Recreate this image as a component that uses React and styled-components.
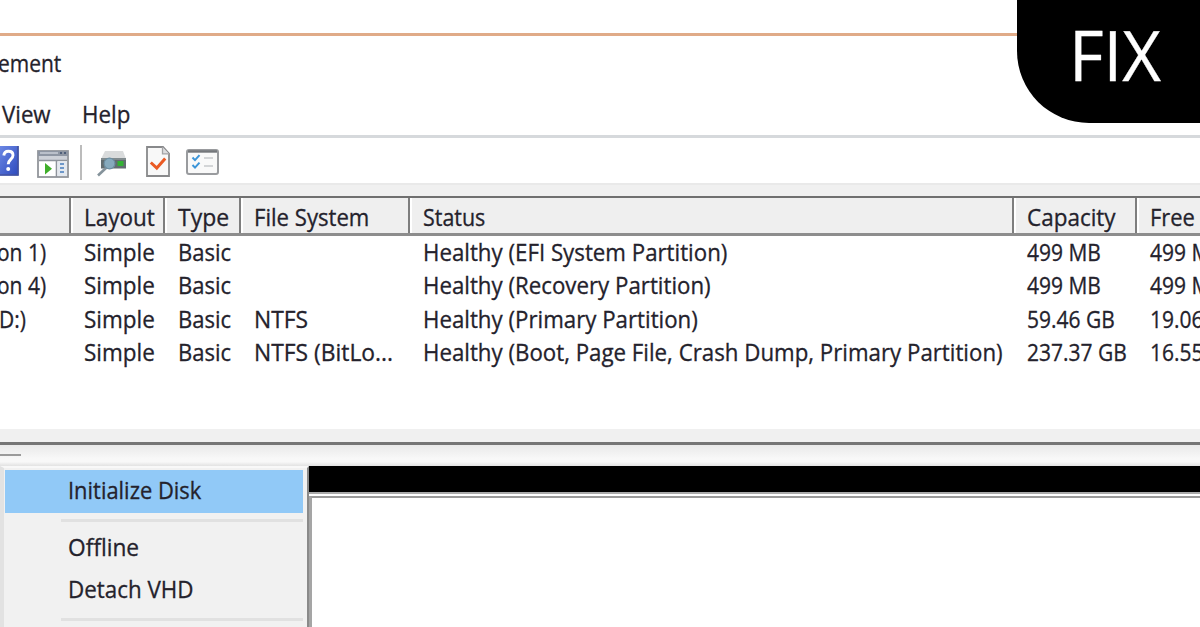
import styled, { createGlobalStyle } from "styled-components";

const columns = "71px 94px 76px 169px 604px 123px 150px";

const headers = [
  ["", 0.9],
  ["Layout", 0.965],
  ["Type", 0.985],
  ["File System", 0.95],
  ["Status", 0.92],
  ["Capacity", 0.965],
  ["Free Space", 0.94],
];

const volumes = [
  ["on 1)", "Simple", "Basic", "", "Healthy (EFI System Partition)", "499 MB", "499 MB"],
  ["on 4)", "Simple", "Basic", "", "Healthy (Recovery Partition)", "499 MB", "499 MB"],
  ["D:)", "Simple", "Basic", "NTFS", "Healthy (Primary Partition)", "59.46 GB", "19.06 GB"],
  [
    "",
    "Simple",
    "Basic",
    "NTFS (BitLo...",
    "Healthy (Boot, Page File, Crash Dump, Primary Partition)",
    "237.37 GB",
    "16.55 GB",
  ],
];

// horizontal stretch of the text in each column
const stretches = [0.9, 0.965, 0.945, 0.98, 0.956, 0.9, 0.9];

const App = () => {
  return (
    <Screen>
      <GlobalStyle />
      <TopMargin />
      <TitleBar>
        <Label $stretch={0.9}>ement</Label>
      </TitleBar>
      <MenuBar>
        <Label $stretch={0.955}>View</Label>
        <Label $stretch={0.96}>Help</Label>
      </MenuBar>
      <Toolbar>
        <HelpIcon />
        <ConsoleIcon />
        <Divider />
        <DriveIcon />
        <CheckIcon />
        <ListIcon />
      </Toolbar>
      <Gutter />
      <HeaderRow>
        {headers.map(([text, stretch], i) => (
          <HeaderCell key={i} $first={i === 0}>
            <Label $stretch={stretch}>{text}</Label>
          </HeaderCell>
        ))}
      </HeaderRow>
      <Volumes>
        {volumes.map((row, i) => (
          <Row key={i}>
            {row.map((text, j) => (
              <Cell key={j} $shift={j > 0 ? 0 : text === "D:)" ? -1 : -3}>
                <Label $stretch={stretches[j]}>{text}</Label>
              </Cell>
            ))}
          </Row>
        ))}
      </Volumes>
      <Splitter />
      <PaneTop>
        <PaneEdge />
      </PaneTop>
      <Lower>
        <ContextMenu>
          <MenuItem $active>
            <Label $stretch={0.94}>Initialize Disk</Label>
          </MenuItem>
          <Separator />
          <MenuItem>
            <Label $stretch={0.975}>Offline</Label>
          </MenuItem>
          <MenuItem>
            <Label $stretch={0.96}>Detach VHD</Label>
          </MenuItem>
          <Separator />
        </ContextMenu>
        <DiskPane>
          <DiskStripe />
          <DiskBody />
        </DiskPane>
      </Lower>
      <Badge>
        <Label $stretch={0.965}>FIX</Label>
      </Badge>
    </Screen>
  );
};

const HelpIcon = () => (
  <Icon width="20" height="32" viewBox="0 0 20 32" $left={0} $top={0}>
    <defs>
      <linearGradient id="help" x1="0" y1="0" x2="1" y2="1">
        <stop offset="0" stopColor="#6f8be6" />
        <stop offset="1" stopColor="#2c49bd" />
      </linearGradient>
    </defs>
    <rect x="-2" y="1" width="20.5" height="29.5" fill="url(#help)" />
    <path d="M18 1v29H0" fill="none" stroke="#4353a0" strokeWidth="1.6" />
    <path
      d="M3.8 10.5c.3-3.2 2-4.3 4.6-4.3 3 0 4.6 1.5 4.6 4 0 4.3-4.8 4-4.8 9"
      fill="none"
      stroke="#fff"
      strokeWidth="2.9"
    />
    <circle cx="8.2" cy="24" r="2" fill="#fff" />
  </Icon>
);

const ConsoleIcon = () => (
  <Icon width="32" height="28" viewBox="0 0 32 28" $left={17} $top={5}>
    <rect x="1" y="1" width="30" height="26" fill="#fff" stroke="#92959b" strokeWidth="1.8" />
    <rect x="1" y="1" width="30" height="5" fill="#8e96a3" />
    <path d="M3 3h18" stroke="#c6cbd4" strokeWidth="1.6" />
    <path d="M23 3h2M27 3h2" stroke="#4f5f7a" strokeWidth="2" />
    <rect x="2" y="6" width="28" height="4" fill="#cdd1d8" />
    <path d="M2 10.5h28M19.5 10v17" stroke="#8e939b" strokeWidth="1.6" />
    <rect x="20.5" y="11.5" width="9.5" height="14.5" fill="#e3e8ef" />
    <path d="M23 14h4M23 18h4M23 22h4" stroke="#6d97c9" strokeWidth="2" />
    <path d="M8 13l7 5.7-7 5.8z" fill="#3fae2a" />
  </Icon>
);

const DriveIcon = () => (
  <Icon width="32" height="30" viewBox="0 0 32 30" $left={15} $top={4}>
    <path d="M8 2h18l3 8H4z" fill="#d9dbdc" />
    <rect x="4" y="9" width="25" height="10.5" fill="#626d70" />
    <path d="M4 10h25" stroke="#8c9698" strokeWidth="1.5" />
    <rect x="20.5" y="12" width="6" height="5" fill="#32b234" />
    <path d="M1 26.5l8.5-8" stroke="#85939b" strokeWidth="2.6" />
    <ellipse cx="12.5" cy="14.5" rx="5.4" ry="5.4" fill="#86aabd" stroke="#6d8fa2" strokeWidth="1.2" />
  </Icon>
);

const CheckIcon = () => (
  <Icon width="24" height="32" viewBox="0 0 24 32" $left={17} $top={1}>
    <path d="M1 1h16l6 6.5V30H1z" fill="#f8f8f8" stroke="#88898b" strokeWidth="1.8" />
    <path d="M16.5 1v6.8H23" fill="#dcdddf" stroke="#a2a3a5" strokeWidth="1.3" />
    <path d="M4.8 16.5l6 5.5 8.4-9.5" fill="none" stroke="#ea5a24" strokeWidth="3" />
  </Icon>
);

const ListIcon = () => (
  <Icon width="33" height="26" viewBox="0 0 33 26" $left={16} $top={4}>
    <rect x="1" y="1" width="31" height="24" rx="2" fill="#f9f9f9" stroke="#999b9e" strokeWidth="2" />
    <path d="M2 2.5h29" stroke="#74777b" strokeWidth="2.4" />
    <path d="M6.5 8.5l2.5 2.6 4.5-5M6.5 16l2.5 2.6 4.5-5" fill="none" stroke="#3c95d8" strokeWidth="2" />
    <path d="M18 9h9M18 17h9" stroke="#d3d5d7" strokeWidth="2" />
  </Icon>
);

const GlobalStyle = createGlobalStyle`
  * {
    box-sizing: border-box;
  }
  body {
    margin: 0;
    overflow: hidden;
    background: #fff;
  }
`;

const Screen = styled.div`
  position: relative;
  width: 1200px;
  height: 627px;
  overflow: hidden;
  display: flex;
  flex-direction: column;
  background: #fff;
  color: #24222c;
  font-family: "Open Sans", "Noto Sans", sans-serif;
  font-size: 23.3px;
  line-height: 33.3px;
  -webkit-text-stroke: 0.3px currentColor;
`;

const Label = styled.span`
  display: block;
  flex: none;
  white-space: pre;
  transform: scaleX(${({ $stretch }) => $stretch});
  transform-origin: left center;
  width: max-content;
`;

const TopMargin = styled.div`
  flex: none;
  height: 36px;
  border-bottom: 3px solid #e0ab88;
`;

const TitleBar = styled.div`
  flex: none;
  height: 60px;
  margin-left: -2px;
  padding-top: 11px;
`;

const MenuBar = styled.div`
  flex: none;
  display: grid;
  grid-template-columns: 80px auto;
  height: 42px;
  padding: 2px 0 0 2px;
  border-bottom: 3px solid #d6d9dc;
`;

const Toolbar = styled.div`
  flex: none;
  display: flex;
  align-items: flex-start;
  height: 45px;
  padding-top: 7px;
`;

const Icon = styled.svg`
  flex: none;
  margin: ${({ $top }) => $top}px 0 0 ${({ $left }) => $left}px;
`;

const Divider = styled.div`
  width: 2px;
  height: 35px;
  margin-left: 11px;
  background: #bcbcbc;
`;

const Gutter = styled.div`
  flex: none;
  height: 13px;
  background: #f0f0f0;
  border-top: 2px solid #e9e9e9;
`;

const HeaderRow = styled.div`
  flex: none;
  display: grid;
  grid-template-columns: ${columns};
  height: 40px;
  background: #efefef;
  border-top: 2px solid #6f6f6f;
  border-bottom: 3px solid #8d8d8d;
`;

const HeaderCell = styled.div`
  padding: 3px 0 0 ${({ $first }) => ($first ? 0 : 11)}px;
  border-left: ${({ $first }) => ($first ? "none" : "2px solid #fff")};
  border-right: 2px solid #7e7e7e;
  overflow: hidden;
`;

const Volumes = styled.div`
  flex: none;
  height: 193px;
`;

const Row = styled.div`
  display: grid;
  grid-template-columns: ${columns};
  height: 33.3px;
`;

const Cell = styled.div`
  margin-left: ${({ $shift }) => $shift || 12.5}px;
`;

const Splitter = styled.div`
  flex: none;
  height: 16px;
  background: #f0f0f0;
  border-bottom: 3px solid #757575;
`;

const PaneTop = styled.div`
  flex: none;
  height: 21px;
  padding-top: 9px;
  background: linear-gradient(#e9e9e9, #f0f0f0 30%, #f8f8f8 65%, #f8f8f8 80%, #e2e2e2);
`;

const PaneEdge = styled.div`
  width: 21px;
  height: 2px;
  background: #9b9b9b;
`;

const Lower = styled.div`
  flex: 1;
  display: flex;
`;

const ContextMenu = styled.div`
  width: 309px;
  padding: 2px 3px 0 1px;
  background: #f1f1f1;
  border-top: 2px solid #f8f8f8;
  border-left: 4px solid #e2e2e2;
  border-right: 2px solid #8a8a8a;
`;

const MenuItem = styled.div`
  display: flex;
  align-items: flex-start;
  width: 298px;
  height: 42.5px;
  padding: 4px 0 0 63px;
  background: ${({ $active }) => ($active ? "#91c9f7" : "transparent")};
`;

const Separator = styled.div`
  width: 242px;
  height: 3px;
  margin: 6px 0 5px 56px;
  background: #e1e1e1;
`;

const DiskPane = styled.div`
  flex: 1;
`;

const DiskStripe = styled.div`
  height: 28px;
  background: #000;
  border-bottom: 2px solid #aaa;
`;

const DiskBody = styled.div`
  height: 140px;
  margin-top: 2px;
  border-top: 2px solid #9a9a9a;
  border-left: 3px solid #a5a5a5;
`;

const Badge = styled.div`
  position: absolute;
  top: 0;
  right: 0;
  width: 183px;
  height: 123px;
  padding-left: 52px;
  border-bottom-left-radius: 72px;
  background: #000;
  color: #fff;
  font-size: 69.5px;
  line-height: 109px;
`;

export default App;
